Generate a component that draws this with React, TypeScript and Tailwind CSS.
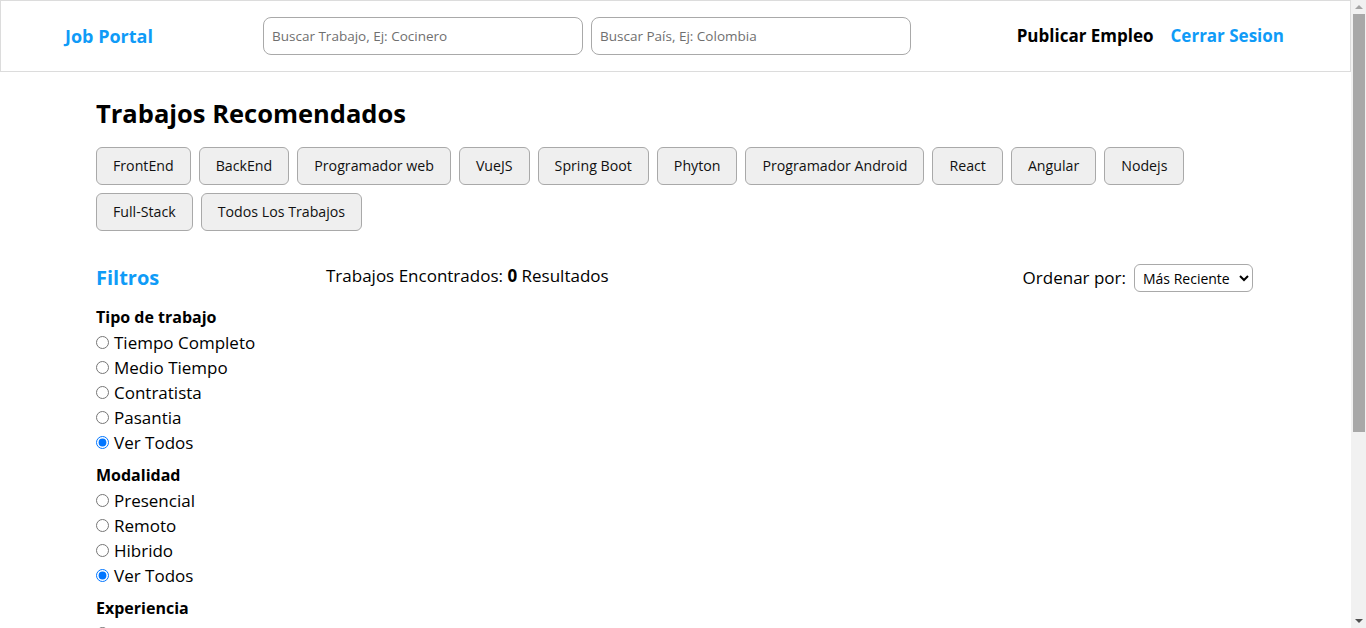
import { useState } from 'react';

const tags = [
  'FrontEnd',
  'BackEnd',
  'Programador web',
  'VueJS',
  'Spring Boot',
  'Phyton',
  'Programador Android',
  'React',
  'Angular',
  'Nodejs',
  'Full-Stack',
  'Todos Los Trabajos',
];

const filterGroups = [
  { name: 'tipo', title: 'Tipo de trabajo', options: ['Tiempo Completo', 'Medio Tiempo', 'Contratista', 'Pasantia', 'Ver Todos'] },
  { name: 'modalidad', title: 'Modalidad', options: ['Presencial', 'Remoto', 'Hibrido', 'Ver Todos'] },
  { name: 'experiencia', title: 'Experiencia', options: ['Sin Experiencia', '1 - 2 Años', '3 - 5 Años', 'Más de 5 Años', 'Ver Todos'] },
];

function ScrollBar() {
  return (
    <div className="w-[15px] shrink-0 bg-[#f1f1f1] flex flex-col items-center">
      <div className="h-[14px] flex items-center justify-center">
        <span className="w-0 h-0 border-x-4 border-x-transparent border-b-4 border-b-[#a3a3a3]" />
      </div>
      <div className="w-[12px] h-[418px] bg-[#a8a8a8]" />
      <div className="mt-auto h-[14px] flex items-center justify-center">
        <span className="w-0 h-0 border-x-4 border-x-transparent border-t-4 border-t-[#505050]" />
      </div>
    </div>
  );
}

export default function App() {
  const [selected, setSelected] = useState<Record<string, string>>({
    tipo: 'Ver Todos',
    modalidad: 'Ver Todos',
    experiencia: 'Ver Todos',
  });

  return (
    <div className="h-screen flex overflow-hidden bg-white text-black font-['Open_Sans',sans-serif]">
      <div className="w-[1351px] shrink-0 overflow-hidden">
        <header className="h-[72px] border border-[#dcdcdc] flex items-center pl-[64px] pr-[66px]">
          <a href="#" className="w-[198px] text-[18px] font-bold text-[#0f9bf7]">
            Job Portal
          </a>
          <div className="flex gap-2">
            <input
              className="w-[320px] h-[38px] rounded-lg border border-[#a9a9a9] px-2 text-[13.5px] placeholder:text-[#6f6f6f] outline-none"
              placeholder="Buscar Trabajo, Ej: Cocinero"
            />
            <input
              className="w-[320px] h-[38px] rounded-lg border border-[#a9a9a9] px-2 text-[13.5px] placeholder:text-[#6f6f6f] outline-none"
              placeholder="Buscar País, Ej: Colombia"
            />
          </div>
          <nav className="ml-auto flex items-center gap-[17px] text-[17px] font-bold">
            <a href="#" className="text-black">Publicar Empleo</a>
            <a href="#" className="text-[#0f9bf7]">Cerrar Sesion</a>
          </nav>
        </header>

        <main className="pl-[96px] pr-[98px] pb-[120px]">
          <h1 className="mt-[25px] text-[25.5px] leading-8 font-bold">Trabajos Recomendados</h1>

          <div className="mt-[18px] flex flex-wrap gap-2">
            {tags.map(tag => (
              <button
                key={tag}
                className="h-[38px] px-4 rounded-md border border-[#a9a9a9] bg-[#efefef] text-[14.2px] text-[#111]"
              >
                {tag}
              </button>
            ))}
          </div>

          <div className="mt-[33px] flex">
            <aside className="w-[230px] shrink-0">
              <h2 className="text-[20px] leading-7 font-bold text-[#0f9bf7]">Filtros</h2>
              <div className="mt-[13px]">
                {filterGroups.map(group => (
                  <div key={group.name} className="mb-2">
                    <p className="text-[16px] leading-[25px] font-bold">{group.title}</p>
                    {group.options.map(opt => (
                      <label key={opt} className="flex items-center gap-[5px] text-[17px] leading-[25px]">
                        <input
                          type="radio"
                          name={group.name}
                          className="w-[13px] h-[13px] m-0"
                          checked={selected[group.name] === opt}
                          onChange={() => setSelected(prev => ({ ...prev, [group.name]: opt }))}
                        />
                        {opt}
                      </label>
                    ))}
                  </div>
                ))}
              </div>
            </aside>

            <section className="flex-1 flex justify-between items-start">
              <p className="text-[17px] leading-6">
                Trabajos Encontrados: <b>0</b> Resultados
              </p>
              <div className="flex items-center gap-2">
                <span className="text-[17px]">Ordenar por:</span>
                <select className="h-[28px] w-[119px] rounded-md border border-[#a9a9a9] px-1 text-[14px] bg-white">
                  <option>Más Reciente</option>
                  <option>Más Antiguo</option>
                </select>
              </div>
            </section>
          </div>
        </main>
      </div>
      <ScrollBar />
    </div>
  );
}
